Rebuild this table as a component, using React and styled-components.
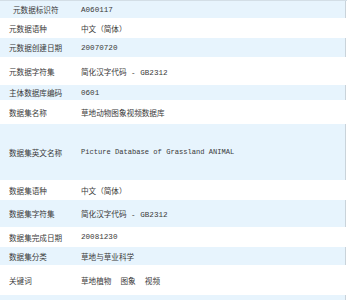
import React from 'react'
import styled, { createGlobalStyle } from 'styled-components'

const Global = createGlobalStyle`
    body {
        margin: 0;
        background: #fff;
    }
`

const Table = styled.div`
    width: 347px;
    display: flex;
    flex-direction: column;
    border-top: 1px solid #d3dee6;
    font-family: "Liberation Mono", "Noto Sans CJK SC", monospace;
    font-size: 7.6px;
    color: #3a3a3a;
`

const Row = styled.div`
    height: ${p => p.$h}px;
    width: 346px;
    display: flex;
    align-items: center;
    background: ${p => (p.$alt ? '#e7f4fd' : '#fff')};
    border-right: 1px solid ${p => (p.$alt ? '#c9d3da' : '#fff')};
    box-sizing: border-box;
`

const Label = styled.div`
    width: 81px;
    padding-left: ${p => (p.$indent ? 13 : 9)}px;
    box-sizing: border-box;
    flex-shrink: 0;
`

const Value = styled.div`
    font-size: ${p => (p.$latin ? 7.1 : 7.6)}px;
    white-space: pre;
`

const rows = [
    ['元数据标识符', 'A060117', 17, true, true],
    ['元数据语种', '中文（简体）', 20],
    ['元数据创建日期', '20070720', 19, true],
    ['元数据字符集', '简化汉字代码 - GB2312', 28],
    ['主体数据库编码', '0601', 15, true],
    ['数据集名称', '草地动物图象视频数据库', 24],
    ['数据集英文名称', 'Picture Database of Grassland ANIMAL', 56, true, false, true],
    ['数据集语种', '中文（简体）', 20],
    ['数据集字符集', '简化汉字代码 - GB2312', 27, true],
    ['数据集完成日期', '20081230', 20],
    ['数据集分类', '草地与草业科学', 18, true],
    ['关键词', '草地植物  图象  视频', 30],
    ['', '', 20, true],
]

const App = () => {
  return (
    <div>
        <Global />
        <Table>
            {rows.map(([label, value, h, alt, indent, latin], i) => (
                <Row key={i} $h={h} $alt={alt}>
                    <Label $indent={indent}>{label}</Label>
                    <Value $latin={latin}>{value}</Value>
                </Row>
            ))}
        </Table>
    </div>
  )
}

export default App
